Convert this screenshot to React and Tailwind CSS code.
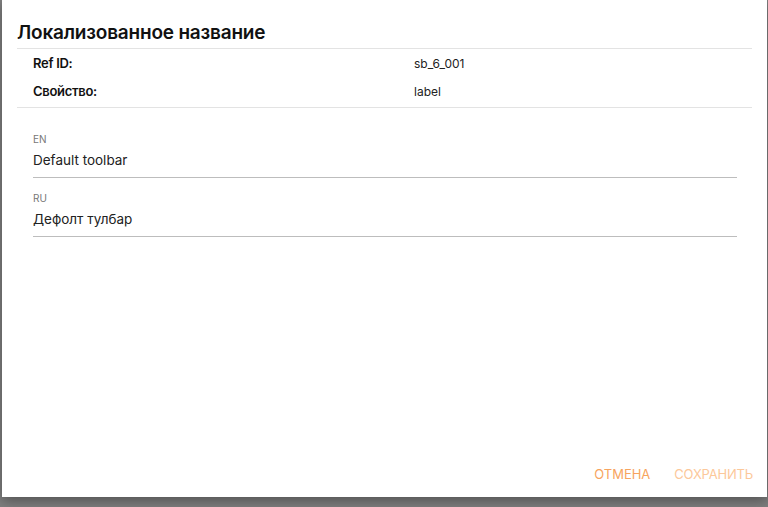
const fields = [
  { lang: 'EN', value: 'Default toolbar' },
  { lang: 'RU', value: 'Дефолт тулбар' },
]

const info = [
  { label: 'Ref ID:', value: 'sb_6_001' },
  { label: 'Свойство:', value: 'label' },
]

export default function App() {
  return (
    <div className="h-[507px] w-[768px] overflow-hidden bg-[#7f7f7f] font-['Inter',sans-serif]">
      <div className="ml-[2px] flex h-[497px] w-[765px] flex-col bg-white shadow-[0_4px_12px_rgba(0,0,0,0.35)]">
        {/* Заголовок */}
        <h2 className="px-[15px] pt-[21px] pb-[3px] text-[19px] leading-[24px] font-semibold tracking-[-0.2px] text-[#111]">
          Локализованное название
        </h2>

        {/* Информация */}
        <div className="mx-[15px] border-y border-[#e3e3e3] py-[1px]">
          {info.map((row) => (
            <div key={row.label} className="flex h-[28px] items-center">
              <span className="w-[397px] pl-[16px] text-[13px] font-semibold tracking-[-0.3px] text-[#111]">{row.label}</span>
              <span className="text-[12px] text-[#222]">{row.value}</span>
            </div>
          ))}
        </div>

        {/* Поля переводов */}
        <div className="mt-[24px] flex flex-col gap-[13px] pl-[31px] pr-[30px]">
          {fields.map((f) => (
            <div key={f.lang} className="border-b border-[#bdbdbd] pb-[8px]">
              <div className="text-[10px] leading-[14px] text-[#777]">{f.lang}</div>
              <div className="mt-[5px] text-[13.5px] leading-[18px] text-[#222]">{f.value}</div>
            </div>
          ))}
        </div>

        {/* Кнопки */}
        <div className="mt-auto mb-[13px] flex justify-end gap-[24px] pr-[14px]">
          <button type="button" className="text-[13px] text-[#f7a45e]">ОТМЕНА</button>
          <button type="button" className="text-[13px] tracking-[-0.2px] text-[#fcc89a]">СОХРАНИТЬ</button>
        </div>
      </div>
    </div>
  )
}
